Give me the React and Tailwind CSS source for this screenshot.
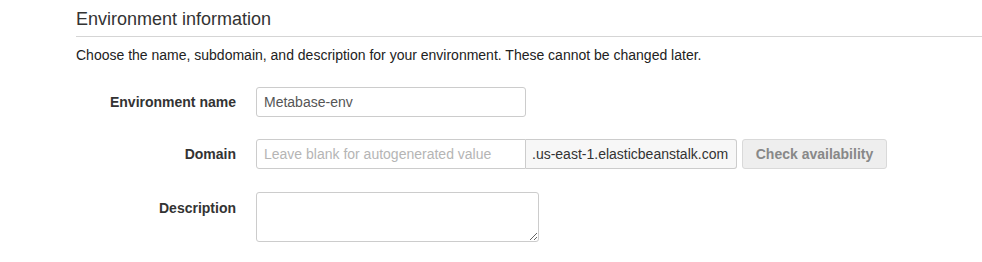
import React from 'react';

// Environment information form section
function FieldRow({ label, children, alignTop }) {
  return (
    <div className={`flex gap-5 ${alignTop ? 'items-start' : 'items-center'}`}>
      <label className={`w-[160px] shrink-0 text-right text-[14px] font-bold text-[#333] ${alignTop ? 'pt-[6px]' : ''}`}>
        {label}
      </label>
      {children}
    </div>
  );
}

export default function App() {
  return (
    <div className="min-h-screen bg-white pl-[76px] pt-[7px] text-[#333]" style={{ fontFamily: '"Liberation Sans", Arial, sans-serif' }}>
      <h2 className="text-[18px] leading-[24px] text-[#333] pb-[5px] border-b border-[#d5d5d5]">Environment information</h2>
      <p className="mt-[9px] text-[14px] leading-[18px] text-[#222]">
        Choose the name, subdomain, and description for your environment. These cannot be changed later.
      </p>

      <div className="mt-[23px] flex flex-col">
        <FieldRow label="Environment name">
          <input
            type="text"
            defaultValue="Metabase-env"
            className="w-[270px] h-[30px] px-[7px] text-[14px] text-[#555] bg-white border border-[#ccc] rounded-[3px] outline-none"
          />
        </FieldRow>

        <div className="mt-[22px]">
          <FieldRow label="Domain">
            <div className="flex items-center">
              <div className="flex">
                <input
                  type="text"
                  placeholder="Leave blank for autogenerated value"
                  className="w-[270px] h-[30px] px-[7px] text-[14px] text-[#555] placeholder:text-[#b5b5b5] bg-white border border-[#ccc] rounded-l-[3px] outline-none"
                />
                <span className="h-[30px] w-[211px] flex items-center px-[6px] text-[14px] text-[#333] bg-[#f7f7f7] border border-l-0 border-[#ccc] rounded-r-[3px] whitespace-nowrap">
                  .us-east-1.elasticbeanstalk.com
                </span>
              </div>
              <button
                type="button"
                className="ml-[5px] h-[30px] w-[145px] text-[14px] font-bold text-[#888] bg-[#eeeeee] border border-[#d9d9d9] rounded-[3px]"
              >
                Check availability
              </button>
            </div>
          </FieldRow>
        </div>

        <div className="mt-[23px]">
          <FieldRow label="Description" alignTop>
            <textarea className="w-[283px] h-[50px] px-[7px] py-[5px] text-[14px] bg-white border border-[#ccc] rounded-[3px] outline-none" />
          </FieldRow>
        </div>
      </div>
    </div>
  );
}
